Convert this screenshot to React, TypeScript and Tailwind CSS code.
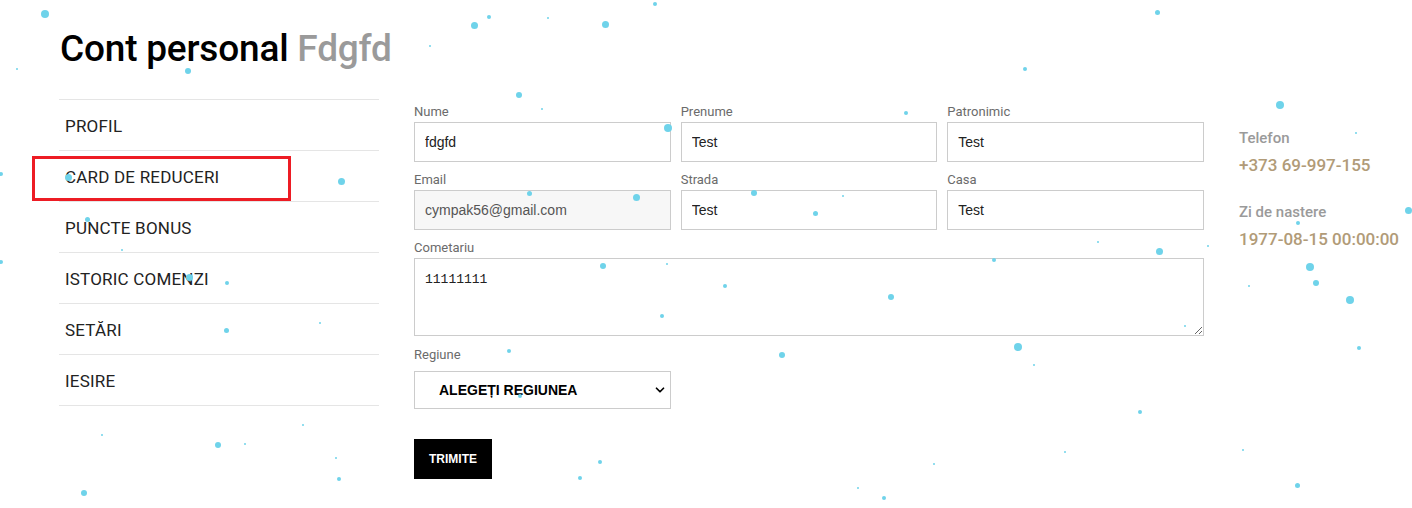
import { ChevronDown } from "lucide-react";

const MENU = ["Profil", "Card de reduceri", "Puncte bonus", "Istoric comenzi", "Setări", "Iesire"];

// falling snow specks: [x, y, diameter]
const SNOW: [number, number, number][] = [
  [45, 14, 8], [474, 25, 7], [489, 17, 4], [548, 18, 2], [605, 24, 7], [655, 4, 4], [1157, 12, 5],
  [430, 46, 2], [188, 71, 6], [17, 69, 2], [1025, 69, 4], [519, 95, 6], [668, 128, 8], [542, 109, 2],
  [906, 113, 4], [1280, 105, 8], [1356, 133, 2], [341, 181, 7], [68, 177, 7], [87, 219, 5],
  [122, 250, 2], [189, 277, 7], [227, 283, 4], [1, 262, 4], [320, 323, 2], [226, 330, 5],
  [529, 193, 5], [636, 197, 7], [754, 193, 6], [815, 213, 5], [843, 196, 2], [1298, 223, 4],
  [1408, 210, 7], [1098, 242, 2], [1159, 251, 7], [1208, 246, 2], [1310, 267, 8], [1249, 286, 2],
  [1316, 283, 6], [1350, 300, 8], [994, 260, 4], [603, 266, 6], [667, 264, 2], [725, 286, 4],
  [891, 297, 6], [662, 316, 4], [1185, 326, 2], [1018, 347, 8], [1359, 348, 4], [782, 355, 6],
  [509, 351, 4], [1034, 365, 2], [520, 396, 4], [1140, 412, 4], [102, 435, 2], [218, 445, 6],
  [245, 444, 2], [303, 425, 2], [336, 458, 2], [1065, 452, 2], [600, 462, 4], [580, 478, 4],
  [934, 464, 2], [1243, 450, 2], [84, 493, 6], [339, 479, 4], [884, 498, 4], [1297, 485, 5],
  [858, 488, 2], [1, 174, 4],
];

function Field({ label, value, muted }: { label: string; value: string; muted?: boolean }) {
  return (
    <label className="flex flex-col">
      <span className="text-[13px] leading-[18px] text-[#6b6b6b] mb-[1px]">{label}</span>
      <input
        readOnly
        value={value}
        className={`h-[40px] border border-[#cccccc] px-[10px] text-[14px] text-[#222] outline-none font-['Liberation_Sans',Arial,sans-serif] ${
          muted ? "bg-[#f7f7f7] text-[#555]" : "bg-white"
        }`}
      />
    </label>
  );
}

export default function App() {
  return (
    <div className="relative min-h-[508px] overflow-hidden bg-white font-['Roboto',sans-serif]">
      <div className="pl-[59px] pt-[26px]">
        <h1 className="ml-[1px] text-[37px] leading-[46px] font-medium tracking-[-0.2px] text-black">
          Cont personal <span className="text-[#9a9a9a]">Fdgfd</span>
        </h1>

        <div className="mt-[27px] flex">
          <nav className="w-[320px] border-t border-[#e5e5e5]">
            {MENU.map((item) => (
              <div
                key={item}
                className="h-[51px] border-b border-[#e5e5e5] pl-[6px] pt-[3px] flex items-center text-[17px] tracking-[0.2px] uppercase text-[#222]"
              >
                {item}
              </div>
            ))}
          </nav>

          <form className="ml-[35px] w-[790px] pt-[4px]">
            <div className="grid grid-cols-3 gap-x-[10px] gap-y-[9px]">
              <Field label="Nume" value="fdgfd" />
              <Field label="Prenume" value="Test" />
              <Field label="Patronimic" value="Test" />
              <Field label="Email" value="cympak56@gmail.com" muted />
              <Field label="Strada" value="Test" />
              <Field label="Casa" value="Test" />
            </div>

            <label className="mt-[9px] flex flex-col">
              <span className="text-[13px] leading-[18px] text-[#6b6b6b] mb-[1px]">Cometariu</span>
              <textarea
                readOnly
                value="11111111"
                className="h-[78px] border border-[#cccccc] px-[10px] pt-[13px] text-[13px] leading-[16px] text-[#222] outline-none font-['Liberation_Mono',monospace]"
              />
            </label>

            <label className="mt-[10px] flex flex-col w-[257px]">
              <span className="text-[13px] leading-[18px] text-[#6b6b6b] mb-[7px]">Regiune</span>
              <div className="relative">
                <select className="w-full h-[38px] appearance-none border border-[#cccccc] bg-white pl-[24px] text-[14px] font-bold text-black font-['Liberation_Sans',Arial,sans-serif] outline-none">
                  <option>ALEGEȚI REGIUNEA</option>
                </select>
                <ChevronDown
                  className="absolute right-[4px] top-[12px] w-[14px] h-[14px] text-black pointer-events-none"
                  strokeWidth={3}
                />
              </div>
            </label>

            <button
              type="button"
              className="mt-[30px] h-[40px] w-[78px] bg-black text-white text-[12px] font-bold font-['Liberation_Sans',Arial,sans-serif]"
            >
              TRIMITE
            </button>
          </form>

          <aside className="ml-[35px] pt-[29px]">
            <div className="text-[15px] font-medium text-[#9a9a9a] leading-[20px]">Telefon</div>
            <div className="mt-[5px] text-[17px] font-medium text-[#b19b78] leading-[24px]">+373 69-997-155</div>
            <div className="mt-[25px] text-[15px] font-medium text-[#9a9a9a] leading-[20px]">Zi de nastere</div>
            <div className="mt-[5px] text-[17px] font-medium text-[#b19b78] leading-[24px]">1977-08-15 00:00:00</div>
          </aside>
        </div>
      </div>

      {/* highlight around the discount card link */}
      <div className="absolute left-[32px] top-[156px] w-[259px] h-[45px] border-[3px] border-[#ed1c24] pointer-events-none" />

      {SNOW.map(([x, y, d], i) => (
        <span
          key={i}
          className="absolute rounded-full bg-[#6fd3ea] pointer-events-none"
          style={{ left: x - d / 2, top: y - d / 2, width: d, height: d }}
        />
      ))}
    </div>
  );
}
